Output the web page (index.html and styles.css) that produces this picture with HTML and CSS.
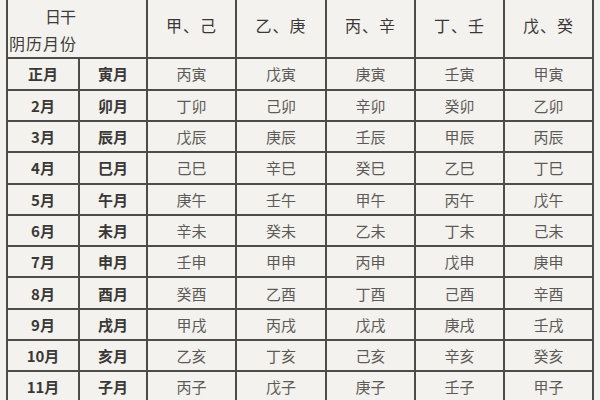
FILE: index.html
```html
<!DOCTYPE html>
<html lang="zh-CN">
<head>
<meta charset="utf-8">
<link rel="stylesheet" href="styles.css">
</head>
<body>
<div class="table">
  <div class="cell corner"><div class="c-top">日干</div><div class="c-bottom">阴历月份</div></div>
  <div class="cell head">甲、己</div>
  <div class="cell head">乙、庚</div>
  <div class="cell head">丙、辛</div>
  <div class="cell head">丁、壬</div>
  <div class="cell head">戊、癸</div>

  <div class="cell lm">正月</div><div class="cell lm">寅月</div><div class="cell">丙寅</div><div class="cell">戊寅</div><div class="cell">庚寅</div><div class="cell">壬寅</div><div class="cell">甲寅</div>
  <div class="cell lm">2月</div><div class="cell lm">卯月</div><div class="cell">丁卯</div><div class="cell">己卯</div><div class="cell">辛卯</div><div class="cell">癸卯</div><div class="cell">乙卯</div>
  <div class="cell lm">3月</div><div class="cell lm">辰月</div><div class="cell">戊辰</div><div class="cell">庚辰</div><div class="cell">壬辰</div><div class="cell">甲辰</div><div class="cell">丙辰</div>
  <div class="cell lm">4月</div><div class="cell lm">巳月</div><div class="cell">己巳</div><div class="cell">辛巳</div><div class="cell">癸巳</div><div class="cell">乙巳</div><div class="cell">丁巳</div>
  <div class="cell lm">5月</div><div class="cell lm">午月</div><div class="cell">庚午</div><div class="cell">壬午</div><div class="cell">甲午</div><div class="cell">丙午</div><div class="cell">戊午</div>
  <div class="cell lm">6月</div><div class="cell lm">未月</div><div class="cell">辛未</div><div class="cell">癸未</div><div class="cell">乙未</div><div class="cell">丁未</div><div class="cell">己未</div>
  <div class="cell lm">7月</div><div class="cell lm">申月</div><div class="cell">壬申</div><div class="cell">甲申</div><div class="cell">丙申</div><div class="cell">戊申</div><div class="cell">庚申</div>
  <div class="cell lm">8月</div><div class="cell lm">酉月</div><div class="cell">癸酉</div><div class="cell">乙酉</div><div class="cell">丁酉</div><div class="cell">己酉</div><div class="cell">辛酉</div>
  <div class="cell lm">9月</div><div class="cell lm">戌月</div><div class="cell">甲戌</div><div class="cell">丙戌</div><div class="cell">戊戌</div><div class="cell">庚戌</div><div class="cell">壬戌</div>
  <div class="cell lm">10月</div><div class="cell lm">亥月</div><div class="cell">乙亥</div><div class="cell">丁亥</div><div class="cell">己亥</div><div class="cell">辛亥</div><div class="cell">癸亥</div>
  <div class="cell lm">11月</div><div class="cell lm">子月</div><div class="cell">丙子</div><div class="cell">戊子</div><div class="cell">庚子</div><div class="cell">壬子</div><div class="cell">甲子</div>
</div>
</body>
</html>
```

FILE: styles.css
```css
html, body {
  margin: 0;
  padding: 0;
  width: 600px;
  height: 400px;
  overflow: hidden;
  background: #f4f2ee;
}

.table {
  display: grid;
  grid-template-columns: 70px 66px 87px 88px 87px 87px 87px;
  grid-template-rows: 65px repeat(11, 29.3px);
  gap: 2px;
  padding: 2px;
  background: #4e4c4a;
  width: max-content;
  margin-left: 6px;
  margin-top: -9.7px;
  font-family: "Noto Sans CJK SC", "Noto Sans", sans-serif;
}

.cell {
  background: #f4f2ee;
  display: flex;
  align-items: center;
  justify-content: center;
  font-size: 15px;
  color: #5c5a58;
  line-height: 1;
}

.corner {
  grid-column: span 2;
  flex-direction: column;
  align-items: flex-start;
  justify-content: flex-start;
  font-size: 16px;
  color: #3e3c3a;
  padding-top: 16px;
}

.c-top {
  padding-left: 37px;
  letter-spacing: -1px;
}

.c-bottom {
  margin-top: 11px;
  padding-left: 1px;
  letter-spacing: 1px;
}

.head {
  font-size: 16px;
  color: #3a3836;
  letter-spacing: 1px;
}

.lm {
  font-size: 15px;
  font-weight: bold;
  color: #3a3836;
}
```
